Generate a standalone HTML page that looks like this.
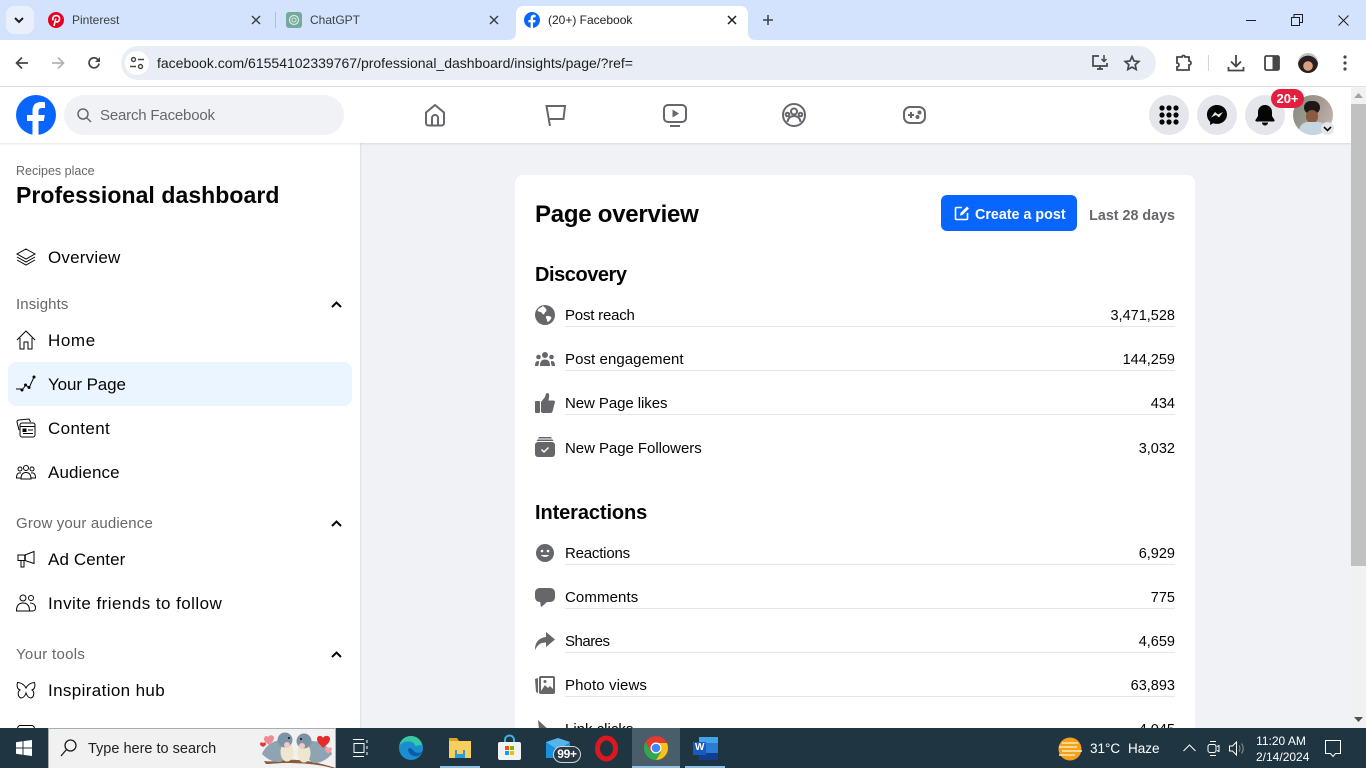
<!DOCTYPE html>
<html><head><meta charset="utf-8"><style>
html,body{margin:0;padding:0;width:1366px;height:768px;overflow:hidden;background:#f0f2f5;font-family:"Liberation Sans",sans-serif;color:#050505}
#w{position:relative;width:1366px;height:768px;overflow:hidden}
.a{position:absolute}
.t{position:absolute;white-space:nowrap;line-height:20px;height:20px}
.s{font-size:17px;left:48px;letter-spacing:.1px;margin-top:1px}
.h{font-size:15px;left:16px;color:#65676b;letter-spacing:.1px;margin-top:1px}
.r{font-size:15px;left:565px;margin-top:2px}
.n{font-size:14.5px;right:191px;margin-top:2px}
.l{position:absolute;left:565px;width:610px;height:1px;background:#e4e6eb}
svg{position:absolute;overflow:visible}
.tb{color:#3c4043;font-size:12px}
</style></head><body><div id="w">
<!-- tab strip -->
<div class="a" style="left:0;top:0;width:1366px;height:40px;background:#d3e3fd"></div>
<div class="a" style="left:6px;top:6px;width:28px;height:28px;border-radius:8px;background:#e9f0fc"></div>
<svg style="left:14px;top:16px" width="10" height="8" viewBox="0 0 10 8"><path d="M1 2l4 4 4-4" fill="none" stroke="#1f1f1f" stroke-width="2"/></svg>
<svg style="left:48px;top:12px" width="16" height="16" viewBox="0 0 16 16"><circle cx="8" cy="8" r="8" fill="#e60023"/><path d="M6 14l1.800-7.500M5 8.400C4 5.500 6 3.600 8.300 3.600c2.300 0 3.500 1.500 3.200 3.500-.3 2-1.600 3.200-3 2.800-.6-.2-1-.6-1-.9" fill="none" stroke="#fff" stroke-width="1.600"/></svg>
<div class="t tb" style="left:72px;top:10px">Pinterest</div>
<svg style="left:251px;top:15px" width="10" height="10"><path d="M1 1l8 8M9 1l-8 8" stroke="#3c4043" stroke-width="1.500"/></svg>
<div class="a" style="left:275px;top:12px;width:1px;height:16px;background:#a8c0e4"></div>
<div class="a" style="left:286px;top:12px;width:16px;height:16px;border-radius:3px;background:#74aa9c"></div>
<svg style="left:286px;top:12px" width="16" height="16"><circle cx="8" cy="8" r="4.500" fill="none" stroke="#d8ebe5" stroke-width="1.200"/><circle cx="8" cy="8" r="2" fill="none" stroke="#d8ebe5" stroke-width="1"/></svg>
<div class="t tb" style="left:310px;top:10px">ChatGPT</div>
<svg style="left:489px;top:15px" width="10" height="10"><path d="M1 1l8 8M9 1l-8 8" stroke="#3c4043" stroke-width="1.500"/></svg>
<svg style="left:508px;top:6px" width="248" height="34" viewBox="0 0 248 34"><path d="M0 34c6 0 8-3 8-8V8c0-5 3-8 8-8h216c5 0 8 3 8 8v18c0 5 2 8 8 8z" fill="#fff"/></svg>
<svg style="left:524px;top:12px" width="16" height="16" viewBox="0 0 40 40"><circle cx="20" cy="20" r="20" fill="#0866ff"/><path d="M16.500 40V26H11v-6h5.500v-4c0-6 3-9 8.500-9 1.500 0 3 .2 4 .4V13h-2.800c-2.700 0-3.700 1.200-3.700 3.600V20h6.300l-1 6h-5.300v14z" fill="#fff"/></svg>
<div class="t tb" style="left:548px;top:10px;color:#1f1f1f">(20+) Facebook</div>
<svg style="left:727px;top:15px" width="10" height="10"><path d="M1 1l8 8M9 1l-8 8" stroke="#1f1f1f" stroke-width="1.500"/></svg>
<svg style="left:762px;top:14px" width="12" height="12"><path d="M6 1v10M1 6h10" stroke="#3c4043" stroke-width="1.500"/></svg>
<svg style="left:1246px;top:20px" width="10" height="2"><path d="M0 .5h10" stroke="#1f1f1f"/></svg>
<svg style="left:1291px;top:14px" width="12" height="12"><path d="M.5 3.500h8v8h-8zM3 3.500V.5h8.500v8H8.500" fill="none" stroke="#1f1f1f"/></svg>
<svg style="left:1338px;top:15px" width="11" height="11"><path d="M.5.500l10 10M10.500.500l-10 10" stroke="#1f1f1f"/></svg>
<!-- toolbar -->
<div class="a" style="left:0;top:40px;width:1366px;height:46px;background:#fff;border-bottom:1px solid #dfe1e5"></div>
<svg style="left:15px;top:56px" width="14" height="14"><path d="M13 7H2M7 1.500L1.500 7 7 12.500" fill="none" stroke="#444746" stroke-width="1.700"/></svg>
<svg style="left:51px;top:56px" width="14" height="14"><path d="M1 7h11M7 1.500L12.500 7 7 12.500" fill="none" stroke="#b0b3b6" stroke-width="1.700"/></svg>
<svg style="left:87px;top:56px" width="14" height="14"><path d="M12 7.500A5 5 0 1 1 10.500 3.200L12.500 5" fill="none" stroke="#444746" stroke-width="1.700"/><path d="M13 1v5H8z" fill="#444746"/></svg>
<div class="a" style="left:121px;top:46px;width:1035px;height:34px;border-radius:17px;background:#e9eef6"></div>
<div class="a" style="left:125px;top:51px;width:24px;height:24px;border-radius:12px;background:#fff"></div>
<svg style="left:130px;top:56px" width="14" height="14"><circle cx="3.500" cy="3.500" r="2" fill="none" stroke="#444746" stroke-width="1.400"/><path d="M8 3.500h6M0 10.500h6" stroke="#444746" stroke-width="1.400"/><circle cx="10.500" cy="10.500" r="2" fill="none" stroke="#444746" stroke-width="1.400"/></svg>
<div class="t" style="left:157px;top:53px;font-size:14px;color:#1f1f1f">facebook.com/61554102339767/professional_dashboard/insights/page/?ref=</div>
<svg style="left:1091px;top:54px" width="18" height="18"><path d="M8 2H2v10h14V9M6 15h6M9 12v3" fill="none" stroke="#444746" stroke-width="1.700"/><path d="M13 1v6M10.500 5l2.500 2.500L15.500 5" fill="none" stroke="#444746" stroke-width="1.500"/></svg>
<svg style="left:1124px;top:55px" width="16" height="16" viewBox="0 0 16 16"><path d="M8 1.500l2 4.500 4.800.5-3.600 3.200 1 4.800L8 12.100l-4.200 2.400 1-4.800L1.200 6.500 6 6z" fill="none" stroke="#444746" stroke-width="1.700"/></svg>
<svg style="left:1174px;top:54px" width="18" height="18"><path d="M5 3h3a1.500 1.500 0 0 1 3 0h4v4a1.500 1.500 0 0 1 0 4v5H3v-3a2 2 0 0 0 0-4V3z" fill="none" stroke="#444746" stroke-width="1.800"/></svg>
<div class="a" style="left:1208px;top:55px;width:1px;height:16px;background:#c7d7f0"></div>
<svg style="left:1228px;top:54px" width="16" height="18"><path d="M8 1v11M3 7.500L8 12.500l5-5M.5 13v3.500h15V13" fill="none" stroke="#444746" stroke-width="1.800"/></svg>
<svg style="left:1264px;top:55px" width="16" height="16"><rect x="1" y="1" width="14" height="14" rx="1.500" fill="none" stroke="#444746" stroke-width="1.800"/><rect x="8.500" y="1" width="6.500" height="14" fill="#444746"/></svg>
<div class="a" style="left:1298px;top:53px;width:20px;height:20px;border-radius:10px;background:radial-gradient(circle at 50% 65%,#d9a07e 0 28%,#2b1e20 30% 62%,#b9c4c0 64%)"></div>
<svg style="left:1343px;top:55px" width="4" height="16"><circle cx="2" cy="2" r="1.600" fill="#444746"/><circle cx="2" cy="8" r="1.600" fill="#444746"/><circle cx="2" cy="14" r="1.600" fill="#444746"/></svg>
<!-- main -->
<div class="a" style="left:360px;top:143px;width:991px;height:585px;background:#f0f2f5"></div>
<div class="a" style="left:515px;top:175px;width:680px;height:553px;background:#fff;border-radius:8px 8px 0 0"></div>
<div class="t" style="left:535px;top:202px;line-height:26px;height:26px;font-size:24px;font-weight:700;letter-spacing:-.25px">Page overview</div>
<div class="a" style="left:941px;top:195px;width:136px;height:36px;border-radius:6px;background:#0866ff"></div>
<svg style="left:954px;top:205px" width="16" height="16"><path d="M8 2.500H2.500a1 1 0 0 0-1 1V13.500a1 1 0 0 0 1 1h10a1 1 0 0 0 1-1V8" fill="none" stroke="#fff" stroke-width="1.600"/><path d="M6 10.500l.5-2.500L13 1.500 15 3.500 8.500 10z" fill="#fff"/></svg>
<div class="t" style="left:975px;top:205px;font-size:14.300px;font-weight:700;color:#fff">Create a post</div>
<div class="t" style="right:191px;top:206px;font-size:14.300px;font-weight:700;color:#65676b">Last 28 days</div>

<div class="t" style="left:535px;top:265px;font-size:20px;font-weight:700;letter-spacing:-.45px">Discovery</div>
<svg style="left:535px;top:305px" width="20" height="20" viewBox="0 0 20 20"><circle cx="10" cy="10" r="10" fill="#65676b"/><path d="M8 1C6 3 3 3 2.500 6c1.500 1 3.500 .5 4.500 2 .5 1.500 2 2 2.500.5.200-1.500 1.500-1.500 2-3 .2-1.500-1.500-3-3.500-4.500zM11.500 11c2-.5 4 .3 5 1.500-.5 2-2 3.500-3.500 4.500-1-.5-1-2-1.200-3-.8-.8-1.300-2-.3-3z" fill="#fff"/></svg>
<div class="t r" style="top:304px;letter-spacing:-.2px">Post reach</div><div class="t n" style="top:304px">3,471,528</div><div class="l" style="top:326px"></div>
<svg style="left:535px;top:352px" width="20" height="14" viewBox="0 0 20 14"><circle cx="10" cy="3" r="3" fill="#65676b"/><circle cx="3.500" cy="5" r="2.300" fill="#65676b"/><circle cx="16.500" cy="5" r="2.300" fill="#65676b"/><path d="M5 14c0-5 2-6.500 5-6.500s5 1.500 5 6.500zM0 14c0-3.500 1-5 3.500-5 1 0 .5 2-.3 5zM20 14c0-3.500-1-5-3.500-5-1 0-.5 2 .3 5z" fill="#65676b"/></svg>
<div class="t r" style="top:348px;letter-spacing:.07px">Post engagement</div><div class="t n" style="top:348px">144,259</div><div class="l" style="top:370px"></div>
<svg style="left:535px;top:393px" width="20" height="20" viewBox="0 0 20 20"><rect x="0" y="8" width="5" height="12" rx="1" fill="#65676b"/><path d="M6 9l4-5c.5-2 1-4 2.500-4S14.500 2 14 4.500L13.500 7.500H18.500c1.500 0 1.800 1.500 1.200 2.500L17.500 18.500c-.3 1-1 1.500-2 1.500H8c-1 0-2-.5-2-2z" fill="#65676b"/></svg>
<div class="t r" style="top:392px;letter-spacing:-.07px">New Page likes</div><div class="t n" style="top:392px">434</div><div class="l" style="top:414px"></div>
<svg style="left:535px;top:437px" width="20" height="20" viewBox="0 0 20 20"><path d="M4 0h12l1 1.500H3zM2.500 2.500h15l1 1.500H1.500z" fill="#65676b"/><rect x="0" y="5" width="20" height="15" rx="3" fill="#65676b"/><path d="M6.500 12.500l2.500 2.500 4.500-4.500" fill="none" stroke="#fff" stroke-width="1.500"/></svg>
<div class="t r" style="top:437px;letter-spacing:-.05px">New Page Followers</div><div class="t n" style="top:437px">3,032</div>

<div class="t" style="left:535px;top:503px;font-size:20px;font-weight:700;letter-spacing:-.1px">Interactions</div>
<svg style="left:536px;top:544px" width="18" height="18" viewBox="0 0 18 18"><circle cx="9" cy="9" r="9" fill="#65676b"/><circle cx="6" cy="7" r="1.300" fill="#fff"/><circle cx="12" cy="7" r="1.300" fill="#fff"/><path d="M5 11c1 2.500 7 2.500 8 0z" fill="#fff"/></svg>
<div class="t r" style="top:542px;letter-spacing:-.2px">Reactions</div><div class="t n" style="top:542px">6,929</div><div class="l" style="top:564px"></div>
<svg style="left:535px;top:588px" width="20" height="20" viewBox="0 0 20 20"><path d="M5 0h10c3 0 5 2 5 5v4c0 3-2 5-5 5h-3c-2 1.500-4 4-6 5-.5-1.500-.5-3-.8-5C2 14 0 12 0 9V5c0-3 2-5 5-5z" fill="#65676b"/></svg>
<div class="t r" style="top:586px;letter-spacing:.1px">Comments</div><div class="t n" style="top:586px">775</div><div class="l" style="top:608px"></div>
<svg style="left:535px;top:632px" width="20" height="18" viewBox="0 0 20 18"><path d="M11 0l9 7.500-9 7.500V10.500C6 10.500 3 12 0 18c0-7 3-12 11-13z" fill="#65676b"/></svg>
<div class="t r" style="top:630px;letter-spacing:-.5px">Shares</div><div class="t n" style="top:630px">4,659</div><div class="l" style="top:652px"></div>
<svg style="left:535px;top:676px" width="20" height="18" viewBox="0 0 20 18"><path d="M0 3l3-1v15l-2-1z" fill="#65676b"/><rect x="4" y="0" width="16" height="18" rx="2" fill="#65676b"/><path d="M6 2h12v14H6z" fill="#fff"/><path d="M6 15l4-6 3 3 2-2 3 3v3H6z" fill="#65676b"/><circle cx="10" cy="5.500" r="1.500" fill="#65676b"/></svg>
<div class="t r" style="top:674px;letter-spacing:.1px">Photo views</div><div class="t n" style="top:674px">63,893</div><div class="l" style="top:696px"></div>
<svg style="left:538px;top:720px" width="14" height="20"><path d="M0 0l13 12H6l-4 7z" fill="#65676b"/></svg>
<div class="t r" style="top:718px">Link clicks</div><div class="t n" style="top:718px">4,045</div>
<!-- sidebar -->
<div class="a" style="left:0;top:143px;width:360px;height:585px;background:#fff;box-shadow:1px 0 1px rgba(0,0,0,.08)"></div>
<div class="t" style="left:16px;top:161px;font-size:12.500px;color:#65676b">Recipes place</div>
<div class="t" style="left:16px;top:181px;height:28px;line-height:28px;font-size:23px;font-weight:700;letter-spacing:.07px">Professional dashboard</div>
<svg style="left:16px;top:247px" width="20" height="20" viewBox="0 0 20 20" fill="none" stroke="#050505"><path d="M10 2l9 5-9 5-9-5zM1 10l9 5 9-5M1 13l9 5 9-5"/></svg>
<div class="t s" style="top:247px;letter-spacing:.2px">Overview</div>
<div class="t h" style="top:294px">Insights</div>
<svg style="left:331px;top:301px" width="11" height="7"><path d="M1 6l4.500-4.500L10 6" fill="none" stroke="#050505" stroke-width="2"/></svg>
<svg style="left:16px;top:330px" width="20" height="20" viewBox="0 0 20 20" fill="none" stroke="#050505"><path d="M1 10l9-9 9 9M4 8v11h4v-7h4v7h4V8"/></svg>
<div class="t s" style="top:330px;letter-spacing:.6px">Home</div>
<div class="a" style="left:8px;top:362px;width:344px;height:44px;border-radius:8px;background:#ebf5ff"></div>
<svg style="left:16px;top:374px" width="20" height="20" viewBox="0 0 20 20"><path d="M0 15l5 0 1 1 4-5 3 3 5-11" fill="none" stroke="#050505"/><circle cx="6" cy="16" r="1.500" fill="#050505"/><circle cx="9.500" cy="11" r="1.500" fill="#050505"/><circle cx="13" cy="13.500" r="1.500" fill="#050505"/><circle cx="18" cy="3" r="1.500" fill="#050505"/></svg>
<div class="t s" style="top:374px;letter-spacing:-.1px">Your Page</div>
<svg style="left:16px;top:418px" width="20" height="20" viewBox="0 0 20 20" fill="none" stroke="#050505"><path d="M3 12L1 4c0-1 .5-2 2-2l10-1 1.500 3"/><rect x="4" y="5" width="15" height="14" rx="2" fill="#fff"/><path d="M4 8.500h15M12 12h5M7 15.500h10"/><rect x="7" y="11" width="3" height="2.500" fill="#050505"/></svg>
<div class="t s" style="top:418px;letter-spacing:.37px">Content</div>
<svg style="left:16px;top:464px" width="20" height="16" viewBox="0 0 20 16" fill="none" stroke="#050505"><circle cx="10" cy="4" r="2.500"/><circle cx="4" cy="5" r="2"/><circle cx="16" cy="5" r="2"/><path d="M5 15c0-5 2-6.500 5-6.500s5 1.500 5 6.500zM5 9C2 8.500.5 10 .5 14H5M15 9c3-.5 4.500 1 4.500 5H15"/></svg>
<div class="t s" style="top:462px">Audience</div>
<div class="t h" style="top:513px;letter-spacing:.15px">Grow your audience</div>
<svg style="left:331px;top:520px" width="11" height="7"><path d="M1 6l4.500-4.500L10 6" fill="none" stroke="#050505" stroke-width="2"/></svg>
<svg style="left:17px;top:551px" width="19" height="17" viewBox="0 0 19 17" fill="none" stroke="#050505"><path d="M1 4h7l9-3.500v12L8 9.500H1zM4 9.500V16h3V9.500"/><path d="M8 4v5.500" stroke-width="1.500"/></svg>
<div class="t s" style="top:549px">Ad Center</div>
<svg style="left:16px;top:594px" width="20" height="18" viewBox="0 0 20 18" fill="none" stroke="#050505"><circle cx="7" cy="4" r="3"/><circle cx="15" cy="4" r="2.500"/><path d="M.5 17c0-5 2-8 6.500-8s6.500 3 6.500 8zM14 9c3 0 5.500 1.500 5.500 5 0 2-1.500 3-3 3h-3"/></svg>
<div class="t s" style="top:593px;letter-spacing:.45px">Invite friends to follow</div>
<div class="t h" style="top:644px;letter-spacing:.3px">Your tools</div>
<svg style="left:331px;top:651px" width="11" height="7"><path d="M1 6l4.500-4.500L10 6" fill="none" stroke="#050505" stroke-width="2"/></svg>
<svg style="left:16px;top:682px" width="20" height="17" viewBox="0 0 20 17" fill="none" stroke="#050505"><path d="M10 6C8 2 4 .5 1.500.5.500 3 1 7 4 8c-3 2-2 7 1 8 2 0 4-2 5-5 1 3 3 5 5 5 3-1 4-6 1-8 3-1 3.500-5 2.500-7.500C16 .5 12 2 10 6z"/></svg>
<div class="t s" style="top:680px;letter-spacing:.37px">Inspiration hub</div>
<svg style="left:17px;top:725px" width="18" height="8"><rect x=".5" y=".5" width="17" height="10" rx="3" fill="none" stroke="#050505"/></svg>
<!-- fb header -->
<div class="a" style="left:0;top:87px;width:1351px;height:56px;background:#fff;box-shadow:0 1px 2px rgba(0,0,0,.1)"></div>
<svg style="left:16px;top:95px" width="40" height="40" viewBox="0 0 40 40"><circle cx="20" cy="20" r="20" fill="#0866ff"/><path d="M16.500 40V26H11v-6h5.500v-4c0-6 3-9 8.500-9 1.500 0 3 .2 4 .4V13h-2.800c-2.700 0-3.700 1.200-3.700 3.600V20h6.300l-1 6h-5.300v14z" fill="#fff"/></svg>
<div class="a" style="left:64px;top:95px;width:280px;height:40px;border-radius:20px;background:#f0f2f5"></div>
<svg style="left:77px;top:108px" width="15" height="15" fill="none" stroke="#65676b" stroke-width="1.500"><circle cx="6" cy="6" r="5"/><path d="M9.500 9.500L14 14"/></svg>
<div class="t" style="left:100px;top:106px;font-size:15px;color:#65676b;letter-spacing:-.18px">Search Facebook</div>
<svg style="left:424px;top:103px" width="22" height="24" viewBox="0 0 22 24" fill="none" stroke="#65676b" stroke-width="2"><path d="M2 9.500L11 2l9 7.500V20a2.500 2.500 0 0 1-2.500 2.500h-13A2.500 2.500 0 0 1 2 20zM8 22.500V15a3 3 0 0 1 6 0v7.500"/></svg>
<svg style="left:545px;top:104px" width="21" height="23" viewBox="0 0 21 23" fill="none" stroke="#65676b" stroke-width="2"><path d="M5 22L1.500 2H20l-1.500 13H3.500"/></svg>
<svg style="left:663px;top:104px" width="24" height="23" viewBox="0 0 24 23" fill="none" stroke="#65676b" stroke-width="2"><rect x="1" y="1" width="22" height="17" rx="4"/><path d="M9.500 5.500l6.500 4-6.500 4z" fill="#65676b" stroke="none"/><path d="M7 22h10"/></svg>
<svg style="left:782px;top:103px" width="24" height="24" viewBox="0 0 24 24" fill="none" stroke="#65676b" stroke-width="2"><circle cx="12" cy="12" r="11"/><circle cx="12" cy="8.500" r="3"/><circle cx="5.500" cy="11.500" r="1.800"/><circle cx="18.500" cy="11.500" r="1.800"/><path d="M5.500 19c.5-4 3-6 6.500-6s6 2 6.500 6"/></svg>
<svg style="left:903px;top:106px" width="23" height="18" viewBox="0 0 23 18" fill="none" stroke="#65676b" stroke-width="2"><rect x="1" y="1" width="21" height="16" rx="6"/><path d="M5 9h6M8 6v6"/><circle cx="16.500" cy="6.500" r="1" fill="#65676b"/><circle cx="14.500" cy="11" r="1" fill="#65676b"/></svg>
<div class="a" style="left:1149px;top:95px;width:40px;height:40px;border-radius:20px;background:#e4e6eb"></div>
<svg style="left:1159px;top:105px" width="20" height="20"><g fill="#050505"><circle cx="3" cy="3" r="2.600"/><circle cx="10" cy="3" r="2.600"/><circle cx="17" cy="3" r="2.600"/><circle cx="3" cy="10" r="2.600"/><circle cx="10" cy="10" r="2.600"/><circle cx="17" cy="10" r="2.600"/><circle cx="3" cy="17" r="2.600"/><circle cx="10" cy="17" r="2.600"/><circle cx="17" cy="17" r="2.600"/></g></svg>
<div class="a" style="left:1197px;top:95px;width:40px;height:40px;border-radius:20px;background:#e4e6eb"></div>
<svg style="left:1207px;top:105px" width="20" height="20" viewBox="0 0 20 20"><path d="M10 0C4.400 0 0 4.100 0 9.600c0 2.900 1.200 5.400 3.100 7.100V20l3-1.700c1.200.4 2.500.6 3.900.6 5.600 0 10-4.100 10-9.400S15.600 0 10 0z" fill="#050505"/><path d="M4 12.500l4-5.500 3 2.500L16 7l-4 5.500-3-2.500z" fill="#e4e6eb"/></svg>
<div class="a" style="left:1245px;top:95px;width:40px;height:40px;border-radius:20px;background:#e4e6eb"></div>
<svg style="left:1255px;top:105px" width="20" height="21" viewBox="0 0 20 21"><path d="M10 0c4 0 7 3 7 7v4l2.500 4c.3.800 0 1.500-1 1.500h-17c-1 0-1.300-.7-1-1.500L3 11V7c0-4 3-7 7-7zM7 17.500h6c0 1.800-1.300 3-3 3s-3-1.200-3-3z" fill="#050505"/></svg>
<div class="a" style="left:1293px;top:95px;width:40px;height:40px;border-radius:20px;background:linear-gradient(115deg,#7d8f80 0,#a3998f 50%,#c9b9b5 100%);overflow:hidden"><div class="a" style="left:11px;top:6px;width:16px;height:13px;border-radius:8px;background:#1e1715"></div><div class="a" style="left:13px;top:15px;width:12px;height:13px;border-radius:6px;background:#8a5a42"></div><div class="a" style="left:6px;top:27px;width:28px;height:18px;border-radius:10px;background:#c5d6e0"></div></div>
<div class="a" style="left:1321px;top:122px;width:13px;height:13px;border-radius:7px;background:#e4e6eb"></div>
<svg style="left:1323px;top:126px" width="9" height="6"><path d="M1 1l3.500 3.500L8 1" fill="none" stroke="#050505" stroke-width="1.600"/></svg>
<div class="a" style="left:1271px;top:89px;width:33px;height:19px;border-radius:10px;background:#e41e3f;color:#fff;font-size:13px;font-weight:700;line-height:19px;text-align:center">20+</div>
<!-- scrollbar -->
<div class="a" style="left:1351px;top:87px;width:15px;height:641px;background:#f1f1f1"></div>
<div class="a" style="left:1351px;top:104px;width:15px;height:462px;background:#c1c1c1"></div>
<svg style="left:1354px;top:93px" width="9" height="5"><path d="M0 5l4.500-5L9 5z" fill="#a3a3a3"/></svg>
<svg style="left:1354px;top:717px" width="9" height="5"><path d="M0 0l4.500 5L9 0z" fill="#505050"/></svg>
<!-- taskbar -->
<div class="a" style="left:0;top:728px;width:1366px;height:40px;background:#1f3541"></div>
<svg style="left:16px;top:740px" width="16" height="16" fill="#fff"><path d="M0 2.300l6.500-1V7.500H0zM7.500 1.100L16 0V7.500H7.500zM0 8.500H6.500v6.300L0 13.800zM7.500 8.500H16V16L7.500 14.900z"/></svg>
<div class="a" style="left:48px;top:728px;width:288px;height:40px;background:#f1f1f1;box-sizing:border-box;border:1px solid #a8adb0;border-bottom:0"></div>
<svg style="left:60px;top:739px" width="17" height="18" fill="none" stroke="#1f1f1f" stroke-width="1.300"><circle cx="10.500" cy="6.500" r="5.500"/><path d="M6.500 10.500L1 17"/></svg>
<div class="t" style="left:88px;top:739px;font-size:14.500px;color:#1f1f1f">Type here to search</div>
<svg style="left:258px;top:728px" width="78" height="40" viewBox="0 0 78 40">
<path d="M6 33c8 1 12 0 20-1 14-1 30 1 52 8l-4 0C60 36 42 35 28 35c-8 0-14 1-20 1z" fill="#8a5b3c"/>
<path d="M4 26c2-6 10-14 20-14l6 2c1 8-1 18-8 20-7 0-12-2-18-8z" fill="#8fa4b2"/>
<ellipse cx="29" cy="24" rx="6.500" ry="9.500" fill="#efe6d0"/>
<circle cx="27" cy="12" r="7.500" fill="#7c93a3"/><circle cx="29" cy="17" r="3" fill="#f3c9c4"/><circle cx="31" cy="10" r="1" fill="#111"/>
<path d="M74 26c-2-6-10-13-20-13l-6 2c-1 8 1 18 8 20 7 0 12-3 18-9z" fill="#8fa4b2"/>
<ellipse cx="46" cy="25" rx="6.500" ry="9.500" fill="#efe6d0"/>
<circle cx="46" cy="13" r="7.500" fill="#7c93a3"/><circle cx="44" cy="18" r="3" fill="#f3c9c4"/><circle cx="43" cy="11" r="1" fill="#111"/>
<path d="M10 9c2-3 6-2 6 1 0 3-3 5-5 7-2-2-5-3-5-6 0-3 3-4 4-2z" fill="#f08a90"/>
<path d="M5 15c1-1 3-1 3 1s-2 2-3 3c-1-1-3-1-3-3s2-2 3-1z" fill="#e43b3b"/>
<path d="M65 10c1-3 7-3 7 1 0 4-4 6-7 9-2-3-6-5-6-9 0-4 5-4 6-1z" fill="#e62b2b"/>
<path d="M70 20c1-1 4-1 4 1s-2 3-4 5c-1-2-3-3-3-5s2-2 3-1z" fill="#f4a0a4"/>
</svg>
<svg style="left:352px;top:739px" width="17" height="18" fill="none" stroke="#fff"><path d="M1 .5h11M1 17.500h11M2 4.500h10v9H2zM15 1v3M15 7v3M15 13v3"/></svg>
<svg style="left:399px;top:736px" width="24" height="24" viewBox="0 0 24 24"><circle cx="12" cy="12" r="12" fill="#1a8ecf"/><path d="M23 9c-1-5-5-9-11-9C6 0 1 4 .3 10c2-3 5-5 10-4.500 5 .5 6 3 5.500 4.500z" fill="#36c7a5"/><path d="M9 13c0 5 5 8 10 7 2-1 4-3 5-5-3 3-8 2-9 0-2-2-4-4-6-2z" fill="#0b5ca8"/></svg>
<svg style="left:449px;top:737px" width="22" height="22" viewBox="0 0 22 22"><path d="M0 1h8l2 3H0z" fill="#e0a425"/><rect y="4" width="22" height="17" fill="#f8cf5d"/><rect x="6" y="13" width="10" height="8" fill="#2c9cd6"/><rect x="8" y="13" width="6" height="4" fill="#f8cf5d"/></svg>
<div class="a" style="left:440px;top:766px;width:40px;height:2px;background:#8fc0e8"></div>
<svg style="left:498px;top:736px" width="23" height="24" viewBox="0 0 23 24"><path d="M7 6V4a4 4 0 0 1 9 0v2" fill="none" stroke="#3ab2e6" stroke-width="2"/><rect y="6" width="23" height="18" rx="2" fill="#f3f3f3"/><rect x="7" y="10" width="4" height="4" fill="#f25022"/><rect x="12" y="10" width="4" height="4" fill="#7fba00"/><rect x="7" y="15" width="4" height="4" fill="#00a4ef"/><rect x="12" y="15" width="4" height="4" fill="#ffb900"/></svg>
<svg style="left:546px;top:738px" width="24" height="20" viewBox="0 0 24 20"><rect y="4" width="24" height="16" fill="#1a8fdc"/><path d="M0 4l12-4 12 4-12 8z" fill="#55b4ec"/></svg>
<div class="a" style="left:553px;top:746px;width:28px;height:17px;border-radius:9px;background:#2a3a45;box-sizing:border-box;border:1px solid #cfd5d8;color:#fff;font-size:12px;line-height:15px;text-align:center;font-weight:700;letter-spacing:-.3px">99+</div>
<svg style="left:595px;top:736px" width="23" height="25" viewBox="0 0 23 25"><ellipse cx="11.500" cy="12.500" rx="9" ry="10.500" fill="none" stroke="#e0161f" stroke-width="5"/></svg>
<div class="a" style="left:632px;top:728px;width:48px;height:40px;background:#4a5e69"></div>
<svg style="left:644px;top:736px" width="24" height="24" viewBox="0 0 24 24"><circle cx="12" cy="12" r="12" fill="#e33b2e"/><path d="M12 24a12 12 0 0 0 12-12c0-2-.5-3.500-1-5H12l5 9z" fill="#fbc116"/><path d="M1.600 6A12 12 0 0 0 12 24l5-8H7z" fill="#2da94f"/><circle cx="12" cy="12" r="5.500" fill="#fff"/><circle cx="12" cy="12" r="4.300" fill="#4285f4"/></svg>
<div class="a" style="left:632px;top:766px;width:48px;height:2px;background:#8fc0e8"></div>
<svg style="left:693px;top:737px" width="25" height="23" viewBox="0 0 25 23"><rect x="6" y="0" width="19" height="23" rx="1" fill="#2b7cd3"/><rect x="6" y="0" width="19" height="6" fill="#41a5ee"/><rect x="6" y="16" width="19" height="7" fill="#103f91"/><rect y="5" width="13" height="13" rx="1" fill="#185abd"/></svg>
<div class="t" style="left:695px;top:738px;font-size:10px;font-weight:700;color:#fff">W</div>
<div class="a" style="left:685px;top:766px;width:40px;height:2px;background:#8fc0e8"></div>
<svg style="left:1058px;top:737px" width="24" height="24" viewBox="0 0 24 24"><circle cx="12" cy="12" r="11.500" fill="#f5a11e"/><path d="M4 6h16M1 10h18M4 14h20M1 18h16" stroke="#ffe9b0" stroke-width="1.600"/></svg>
<div class="t" style="left:1090px;top:739px;font-size:13.500px;color:#fff">31°C</div>
<div class="t" style="left:1128px;top:739px;font-size:13.500px;color:#fff">Haze</div>
<svg style="left:1183px;top:744px" width="13" height="8"><path d="M.5 7l6-6 6 6" fill="none" stroke="#fff"/></svg>
<svg style="left:1207px;top:740px" width="13" height="17" fill="none" stroke="#fff"><rect x="1" y="4.500" width="8" height="8" rx="2"/><path d="M10 6.500l2-1v6l-2-1M3 1.500h6M3 15.500h6"/></svg>
<svg style="left:1229px;top:741px" width="16" height="15" fill="none" stroke="#fff"><path d="M.5 5h3l4-4v13l-4-4h-3z"/><path d="M10 4.500c1.300 1.500 1.300 4.500 0 6M12.500 2.500c2.300 3 2.300 7 0 10" stroke="#8a969c"/></svg>
<div class="t" style="left:1256px;top:731px;width:50px;text-align:center;font-size:12px;color:#fff">11:20 AM</div>
<div class="t" style="left:1256px;top:747px;width:50px;text-align:center;font-size:12px;color:#fff">2/14/2024</div>
<svg style="left:1325px;top:740px" width="16" height="17" fill="none" stroke="#fff"><path d="M.5.500h15v13h-5l-2.500 3-2.500-3h-5z"/></svg>
</div></body></html>
